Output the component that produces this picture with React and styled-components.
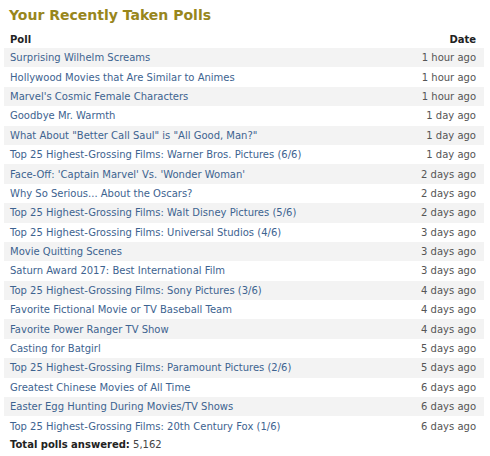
import React from "react";
import styled, { createGlobalStyle } from "styled-components";

const GlobalStyle = createGlobalStyle`
  body {
    margin: 0;
    background: #fff;
    font-family: "DejaVu Sans", Verdana, sans-serif;
  }
`;

const Panel = styled.div`
  width: 490px;
  height: 456px;
  box-sizing: border-box;
  padding: 5px 6px 0 4px;
  background: #fff;
`;

const Title = styled.h2`
  margin: 0 0 0 5px;
  font-size: 14px;
  line-height: 20px;
  font-weight: bold;
  color: #98861c;
`;

const Table = styled.table`
  width: 100%;
  border-collapse: collapse;
  font-size: 10px;
  margin-top: 5px;
`;

const Th = styled.th`
  padding: 0 8px 0 6px;
  height: 18px;
  font-weight: bold;
  color: #222;
  text-align: ${(p) => (p.$right ? "right" : "left")};
`;

const Row = styled.tr`
  background: ${(p) => (p.$odd ? "#f3f3f3" : "#fff")};
`;

const Td = styled.td`
  padding: 0 8px 0 6px;
  height: 19.4px;
  white-space: nowrap;
  text-align: ${(p) => (p.$right ? "right" : "left")};
  color: #555;
`;

const PollLink = styled.a`
  color: #3d6390;
  text-decoration: none;
`;

const Total = styled.div`
  padding: 3px 6px;
  font-size: 10px;
  color: #444;
  b {
    color: #222;
  }
`;

const polls = [
  ["Surprising Wilhelm Screams", "1 hour ago"],
  ["Hollywood Movies that Are Similar to Animes", "1 hour ago"],
  ["Marvel's Cosmic Female Characters", "1 hour ago"],
  ["Goodbye Mr. Warmth", "1 day ago"],
  ['What About "Better Call Saul" is "All Good, Man?"', "1 day ago"],
  ["Top 25 Highest-Grossing Films: Warner Bros. Pictures (6/6)", "1 day ago"],
  ["Face-Off: 'Captain Marvel' Vs. 'Wonder Woman'", "2 days ago"],
  ["Why So Serious... About the Oscars?", "2 days ago"],
  ["Top 25 Highest-Grossing Films: Walt Disney Pictures (5/6)", "2 days ago"],
  ["Top 25 Highest-Grossing Films: Universal Studios (4/6)", "3 days ago"],
  ["Movie Quitting Scenes", "3 days ago"],
  ["Saturn Award 2017: Best International Film", "3 days ago"],
  ["Top 25 Highest-Grossing Films: Sony Pictures (3/6)", "4 days ago"],
  ["Favorite Fictional Movie or TV Baseball Team", "4 days ago"],
  ["Favorite Power Ranger TV Show", "4 days ago"],
  ["Casting for Batgirl", "5 days ago"],
  ["Top 25 Highest-Grossing Films: Paramount Pictures (2/6)", "5 days ago"],
  ["Greatest Chinese Movies of All Time", "6 days ago"],
  ["Easter Egg Hunting During Movies/TV Shows", "6 days ago"],
  ["Top 25 Highest-Grossing Films: 20th Century Fox (1/6)", "6 days ago"],
];

export default function App() {
  return (
    <Panel>
      <GlobalStyle />
      <Title>Your Recently Taken Polls</Title>
      <Table>
        <thead>
          <tr>
            <Th>Poll</Th>
            <Th $right>Date</Th>
          </tr>
        </thead>
        <tbody>
          {polls.map(([name, date], i) => (
            <Row key={name} $odd={i % 2 === 0}>
              <Td>
                <PollLink href="#">{name}</PollLink>
              </Td>
              <Td $right>{date}</Td>
            </Row>
          ))}
        </tbody>
      </Table>
      <Total>
        <b>Total polls answered:</b> 5,162
      </Total>
    </Panel>
  );
}
